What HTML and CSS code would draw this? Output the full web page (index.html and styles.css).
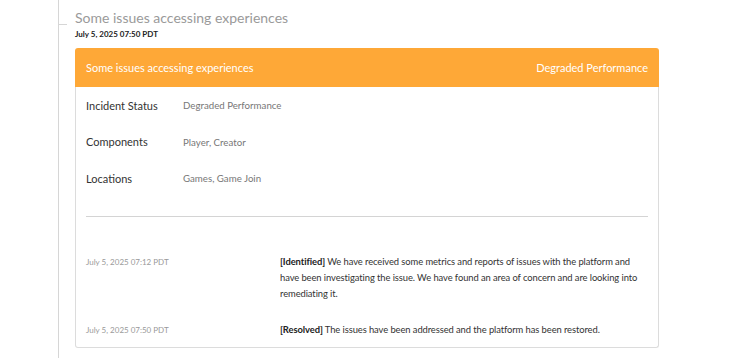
FILE: index.html
```html
<!DOCTYPE html>
<html>
<head>
<meta charset="utf-8">
<link rel="stylesheet" href="styles.css">
</head>
<body>
<div class="timeline">
  <div class="item">
    <h2 class="title">Some issues accessing experiences</h2>
    <div class="stamp">July 5, 2025 07:50 PDT</div>
    <div class="card">
      <div class="card-head">
        <span>Some issues accessing experiences</span>
        <span>Degraded Performance</span>
      </div>
      <div class="card-body">
        <div class="details">
          <div class="row"><span class="label">Incident Status</span><span class="value">Degraded Performance</span></div>
          <div class="row"><span class="label">Components</span><span class="value">Player, Creator</span></div>
          <div class="row"><span class="label">Locations</span><span class="value">Games, Game Join</span></div>
        </div>
        <div class="divider"></div>
        <div class="updates">
          <div class="update">
            <span class="u-date">July 5, 2025 07:12 PDT</span>
            <p class="u-text"><b>[Identified]</b> We have received some metrics and reports of issues with the platform and have been investigating the issue. We have found an area of concern and are looking into remediating it.</p>
          </div>
          <div class="update">
            <span class="u-date">July 5, 2025 07:50 PDT</span>
            <p class="u-text"><b>[Resolved]</b> The issues have been addressed and the platform has been restored.</p>
          </div>
        </div>
      </div>
    </div>
  </div>
</div>
</body>
</html>
```

FILE: styles.css
```css
html, body {
  margin: 0;
  padding: 0;
  background: #fff;
  font-family: Lato, "Open Sans", sans-serif;
}

.timeline {
  margin-left: 58px;
  border-left: 1px solid #d6d6d6;
  min-height: 358px;
  box-sizing: border-box;
  padding-top: 9px;
}

.item {
  position: relative;
  padding-left: 16px;
  width: 584px;
}

.item::before {
  content: "";
  position: absolute;
  left: 0;
  top: 15px;
  width: 8px;
  height: 1px;
  background: #d6d6d6;
}

.title {
  margin: 0;
  font-size: 14px;
  font-weight: 400;
  color: #9a9a9a;
  line-height: 18px;
}

.stamp {
  margin-top: 1px;
  font-size: 8px;
  font-weight: 700;
  color: #222;
  line-height: 12px;
}

.card {
  margin-top: 8px;
}

.card-head {
  height: 39px;
  background: #fea837;
  border-radius: 3px 3px 0 0;
  display: flex;
  justify-content: space-between;
  align-items: center;
  padding: 0 11px;
  color: #fff;
  font-size: 11px;
}

.card-body {
  border: 1px solid #dcdcdc;
  border-top: none;
  border-radius: 0 0 3px 3px;
  padding: 0 10px 9px;
}

.details {
  display: flex;
  flex-direction: column;
}

.row {
  height: 36.5px;
  display: grid;
  grid-template-columns: 97px 1fr;
  align-items: center;
}

.label {
  font-size: 11px;
  color: #333;
}

.value {
  font-size: 9.7px;
  color: #777;
}

.divider {
  margin-top: 19px;
  height: 1px;
  background: #d4d4d4;
}

.updates {
  padding-top: 37px;
  display: flex;
  flex-direction: column;
  gap: 20px;
}

.update {
  display: grid;
  grid-template-columns: 194px 1fr;
  align-items: baseline;
}

.u-date {
  font-size: 8px;
  color: #999;
}

.u-text {
  margin: 0;
  font-size: 9.4px;
  letter-spacing: -0.08px;
  line-height: 16px;
  color: #333;
}

.u-text b {
  font-weight: 700;
  color: #222;
}
```
